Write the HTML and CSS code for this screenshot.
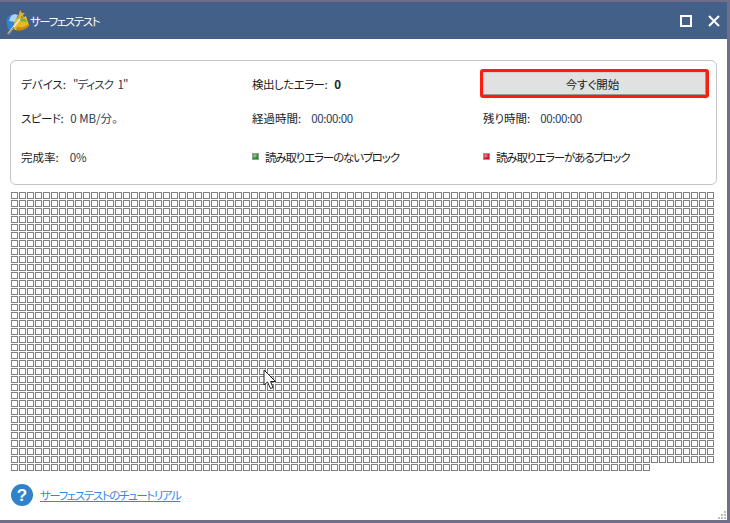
FILE: index.html
```html
<!DOCTYPE html>
<html lang="ja">
<head>
<meta charset="utf-8">
<title>サーフェステスト</title>
<link rel="stylesheet" href="styles.css">
</head>
<body>
<div class="window">
  <header class="titlebar">
    <svg class="app-icon" width="28" height="28" viewBox="0 0 28 28">
      <path d="M4 17 C2 11 7 7 13 7 L13 20 L7 23 C5 22 4 20 4 17Z" fill="#2f86d6"/>
      <path d="M8 9 C10 7 13 7 15 8 L12 15 L6 14Z" fill="#a9d3ef"/>
      <path d="M12 13 L17 8 L19 11 L23 9 L26 18 C25 22 18 24 12 23 C10 22 11 16 12 13Z" fill="#e8b820"/>
      <path d="M14 20 C18 21 23 20 25 17 L25.500 19 C24 22 17 24 13 23Z" fill="#c48a12"/>
      <path d="M15 11 L22 12 L24 15 L17 14Z" fill="#6cb53a"/>
      <path d="M17 3 L19 6 L22 6 L20 8 L21 11 L18 9 L15 10 L16 7Z" fill="#d9b13a"/>
      <path d="M5 27 L17 12" stroke="#e9e4d4" stroke-width="2"/>
      <path d="M5 27 L11 20" stroke="#7a6a4a" stroke-width="1"/>
    </svg>
    <span class="title">サーフェステスト</span>
    <div class="controls">
      <svg width="12" height="12" viewBox="0 0 12 12"><rect x="1" y="1" width="10" height="10" fill="none" stroke="#fff" stroke-width="2"/></svg>
      <svg width="12" height="12" viewBox="0 0 12 12"><path d="M1 1 L11 11 M11 1 L1 11" stroke="#fff" stroke-width="2"/></svg>
    </div>
  </header>
  <main class="content">
    <section class="panel">
      <div class="field"><span class="label">デバイス:</span><span class="value disk">"ディスク 1"</span></div>
      <div class="field"><span class="label tight">検出したエラー:</span><strong class="value count">0</strong></div>
      <div class="field"><button class="start" type="button">今すぐ開始</button></div>
      <div class="field"><span class="label tight">スピード:</span><span class="value">0 MB/分。</span></div>
      <div class="field"><span class="label">経過時間:</span><span class="value time">00:00:00</span></div>
      <div class="field"><span class="label">残り時間:</span><span class="value time">00:00:00</span></div>
      <div class="field"><span class="label">完成率:</span><span class="value pct">0%</span></div>
      <div class="field legend"><i class="dot ok"></i><span>読み取りエラーのないブロック</span></div>
      <div class="field legend"><i class="dot bad"></i><span>読み取りエラーがあるブロック</span></div>
    </section>
    <section class="blocks" id="blocks"></section>
    <footer class="help">
      <svg width="24" height="24" viewBox="0 0 24 24"><circle cx="12" cy="12" r="11" fill="#2f83cb"/><text x="12" y="18" text-anchor="middle" class="qmark">?</text></svg>
      <a href="#" class="tutorial">サーフェステストのチュートリアル</a>
    </footer>
  </main>
  <svg class="grip" width="9" height="9" viewBox="0 0 9 9" fill="#bdbdbd">
    <rect x="6" y="0" width="2" height="2"/><rect x="3" y="3" width="2" height="2"/><rect x="6" y="3" width="2" height="2"/>
    <rect x="0" y="6" width="2" height="2"/><rect x="3" y="6" width="2" height="2"/><rect x="6" y="6" width="2" height="2"/>
  </svg>
  <svg class="cursor" width="15" height="21" viewBox="0 0 15 21">
    <path d="M1 1 L1 16 L4.500 13 L7.500 19.500 L10 18.500 L7.500 12.500 L12.500 12.500 Z" fill="#fff" stroke="#222" stroke-width="1"/>
  </svg>
</div>
<script src="script.js"></script>
</body>
</html>
```

FILE: styles.css
```css
* { box-sizing: border-box; }
html, body { margin: 0; height: 100%; }
body {
  width: 730px;
  height: 523px;
  overflow: hidden;
  background: #6f6f8b;
  padding: 2px 3px 3px 0;
  font-family: "Noto Sans CJK JP", "Liberation Sans", sans-serif;
  font-size: 11.5px;
  font-feature-settings: "palt";
  color: #1c1c1c;
}
.window {
  position: relative;
  height: 518px;
  background: #fff;
  display: flex;
  flex-direction: column;
}
.titlebar {
  height: 37px;
  flex: none;
  background: #436089;
  color: #fff;
  display: flex;
  align-items: center;
  padding: 0 7px 0 3px;
}
.app-icon { flex: none; margin-right: -1px; }
.title { letter-spacing: -1.4px; }
.controls {
  margin-left: auto;
  display: flex;
  gap: 16px;
  align-items: center;
}
.content {
  flex: 1;
  padding: 21px 10px 0 10px;
  display: flex;
  flex-direction: column;
}
.panel {
  width: 707px;
  height: 125px;
  border: 1px solid #c4c4c4;
  border-radius: 6px;
  display: grid;
  grid-template-columns: 231px 231px 1fr;
  grid-template-rows: 29px 30px 30px;
  row-gap: 5px;
  padding: 8px 7px 0 10px;
}
.panel .field:nth-child(n+7) { margin-top: 8px; }
.field {
  display: flex;
  align-items: center;
  gap: 7px;
  white-space: nowrap;
}
.tight { letter-spacing: -0.5px; }
.value { color: #2b3a4d; }
.disk { letter-spacing: -1px; word-spacing: 3px; }
.count { color: #222; font-weight: 700; }
.time { color: #283c5c; letter-spacing: -0.4px; margin-left: 3px; }
.pct { margin-left: 4px; }
.start {
  width: 229px;
  height: 29px;
  margin-left: -3px;
  border: 3px solid #fb1e0c;
  border-radius: 3px;
  background: #e1e1e1;
  box-shadow: inset -1px -1px 0 #9a9a9a, inset 1px 1px 0 #d0d0d0;
  font: inherit;
  color: #222;
  padding: 0 4px 0 0;
}
.legend { gap: 6px; letter-spacing: -1.15px; }
.dot {
  width: 7px;
  height: 7px;
  display: block;
  margin-bottom: 2px;
  border: 1px solid #9a9a9a;
}
.ok { background: radial-gradient(circle at 35% 35%, #8fdc8f, #109010 70%); }
.bad { background: radial-gradient(circle at 35% 35%, #f09090, #c01018 70%); }
.blocks {
  margin: 7px 0 0 1px;
  display: grid;
  grid-template-columns: repeat(88, 7px);
  grid-auto-rows: 7px;
  gap: 1px;
  height: 279px;
}
.blocks span {
  display: block;
  border: 1px solid #808080;
  background: #fff;
}
.help {
  margin-top: 12px;
  display: flex;
  align-items: center;
  gap: 6px;
}
.qmark {
  font-family: "Liberation Sans", sans-serif;
  font-size: 17px;
  font-weight: 700;
  fill: #fff;
}
.tutorial {
  color: #2f8ae6;
  text-decoration: underline;
  letter-spacing: -1.4px;
}
.grip {
  position: absolute;
  right: 0;
  bottom: 0;
}
.cursor {
  position: absolute;
  left: 263px;
  top: 367px;
}
```

FILE: script.js
```js
var grid = document.getElementById('blocks');
var frag = document.createDocumentFragment();
for (var i = 0; i < 34 * 88 + 80; i++) {
  frag.appendChild(document.createElement('span'));
}
grid.appendChild(frag);
```
